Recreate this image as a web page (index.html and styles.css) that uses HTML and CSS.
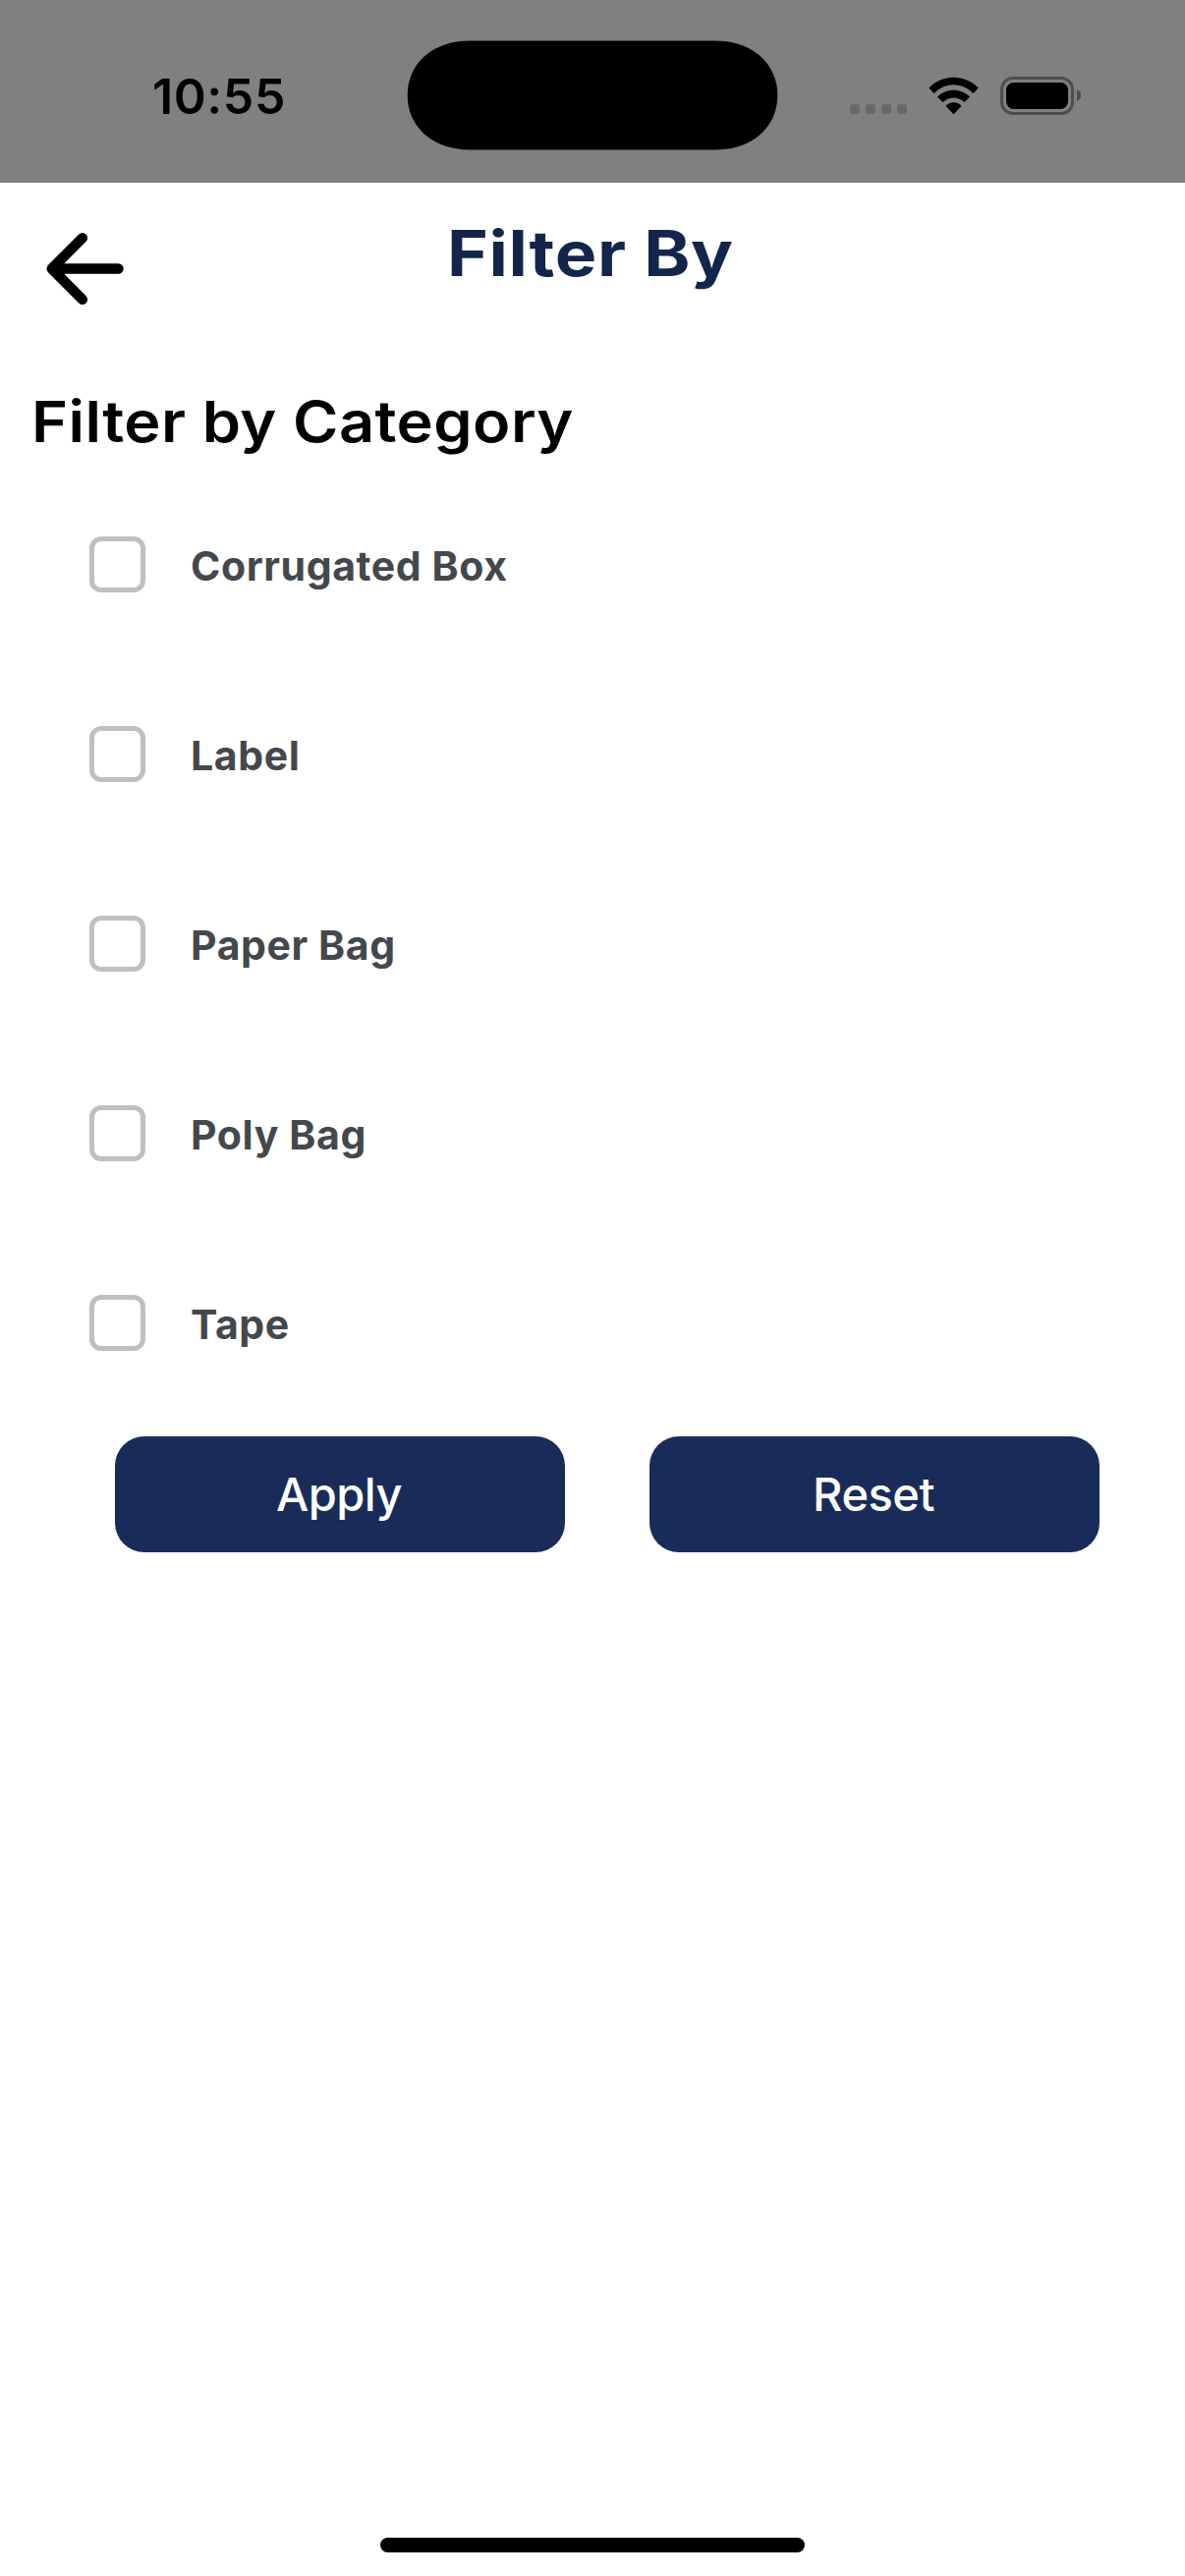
FILE: index.html
```html
<!DOCTYPE html>
<html lang="en">
<head>
<meta charset="utf-8">
<title>Filter By</title>
<link rel="stylesheet" href="styles.css">
</head>
<body>
<div class="screen">
  <div class="status">
    <div class="time">10:55</div>
    <svg class="island" width="378" height="112" viewBox="0 0 378 112"><path d="M64 .6H314C352 .6 377.300 24 377.300 56S352 111.400 314 111.400H64C26 111.400 .7 88 .7 56S26 .6 64 .6Z"/></svg>
    <svg class="indicators" width="240" height="44" viewBox="862 75 240 44">
      <g fill="#686868"><rect x="865" y="106" width="10" height="10" rx="3.300"/><rect x="881" y="106" width="10" height="10" rx="3.300"/><rect x="897" y="106" width="10" height="10" rx="3.300"/><rect x="913" y="106" width="10" height="10" rx="3.300"/></g>
      <path d="M945.400 89.500C959 75.200 982 75.200 995.700 89.500L991.200 94.400Q990.500 95 989.800 94.400C978.500 83.600 962.500 83.600 951.300 94.400Q950.500 95 949.900 94.400Z"/>
      <path d="M954 98.600C963 89.500 978 89.500 987 98.600L982.200 103.600Q981.500 104.200 980.700 103.600C974.500 98 966.500 98 960.300 103.600Q959.600 104.200 958.900 103.600Z"/>
      <path d="M962.800 107.500C967.500 103.200 973.700 103.200 978.200 107.500Q978.500 107.900 978.200 108.300L971.300 115.600Q970.500 116.400 969.700 115.600L962.800 108.300Q962.500 107.900 962.800 107.500Z"/>
      <rect x="1019.500" y="79.500" width="72" height="36" rx="11.500" fill="none" stroke="#4d4d4d" stroke-width="3"/>
      <rect x="1024" y="84" width="63" height="27" rx="7.500"/>
      <path d="M1096 91C1101.300 93.500 1101.300 100.700 1096 103.200Z" fill="#4d4d4d"/>
    </svg>
  </div>
  <header class="header">
    <svg class="back" width="80" height="75" viewBox="47 236 80 75"><path d="M120.500 273.500H52.700M83.900 242.200L52.700 273.500L83.900 304.800" fill="none" stroke="#000" stroke-width="10.400" stroke-linecap="round" stroke-linejoin="round"/></svg>
    <h1 class="title">Filter By</h1>
  </header>
  <h2 class="heading">Filter by Category</h2>
  <div class="options">
    <div class="option"><span class="box"></span><span class="label">Corrugated Box</span></div>
    <div class="option"><span class="box"></span><span class="label">Label</span></div>
    <div class="option"><span class="box"></span><span class="label">Paper Bag</span></div>
    <div class="option"><span class="box"></span><span class="label">Poly Bag</span></div>
    <div class="option"><span class="box"></span><span class="label">Tape</span></div>
  </div>
  <div class="actions">
    <button class="button">Apply</button>
    <button class="button">Reset</button>
  </div>
  <div class="home"></div>
</div>
</body>
</html>
```
FILE: styles.css
```css
* { box-sizing: border-box; }
body { margin: 0; background: #fff; font-family: Inter, "Liberation Sans", sans-serif; }
.screen { width: 1206px; height: 2622px; display: flex; flex-direction: column; overflow: hidden; }
.status { height: 186px; flex: none; display: flex; align-items: flex-start; background: #808080; }
.time { width: 259px; margin: 68px 0 0 155px; font-size: 50px; font-weight: 600; line-height: 60px; letter-spacing: 0.6px; }
.island { margin-top: 41px; flex: none; }
.indicators { margin: 75px 0 0 70px; flex: none; }
.header { height: 174px; flex: none; display: flex; align-items: flex-start; padding-left: 47px; }
.back { margin-top: 50px; flex: none; }
.title { margin: 32px 0 0 328px; color: #14254c; font-size: 64px; font-weight: 700; line-height: 80px; letter-spacing: 0.6px; white-space: nowrap; transform: scaleX(1.115); transform-origin: left; }
.heading { margin: 34px 0 14px 32px; align-self: flex-start; font-size: 58px; font-weight: 600; line-height: 70px; letter-spacing: 0.4px; white-space: nowrap; transform: scaleX(1.086); transform-origin: left; }
.option { height: 193px; display: flex; align-items: center; gap: 46px; padding-left: 91px; }
.box { width: 57px; height: 57px; border: 5px solid #bfbfbf; border-radius: 12px; }
.label { padding-top: 3px; color: #43484d; font-size: 41px; font-weight: 700; line-height: 50px; letter-spacing: 0.6px; }
.actions { display: flex; gap: 86px; margin: 19px 0 0 117px; }
.button { width: 458px; height: 118px; padding: 0 2px 0 0; border: 0; border-radius: 30px; background: #192c59; color: #fff; font-family: inherit; font-size: 47px; font-weight: 500; line-height: 50px; letter-spacing: -0.5px; }
.home { width: 432px; height: 15px; margin: auto auto 24px; border-radius: 8px; background: #000; }
```
